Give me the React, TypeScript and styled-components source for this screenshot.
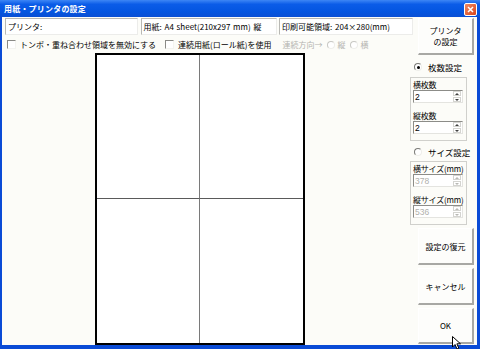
import styled, { createGlobalStyle } from 'styled-components';

const GlobalStyle = createGlobalStyle`
  html, body {
    margin: 0;
    padding: 0;
    background: #ffffff;
  }
  body {
    font-family: "Noto Sans CJK JP", "Liberation Sans", sans-serif;
    font-size: 8px;
    color: #000;
  }
`;

const Window = styled.div`
  position: relative;
  width: 480px;
  height: 349px;
  box-sizing: border-box;
  display: flex;
  flex-direction: column;
  background: #0a4bd6;
  overflow: hidden;
`;

const TitleBar = styled.div`
  height: 17px;
  flex-shrink: 0;
  display: flex;
  align-items: center;
  justify-content: space-between;
  padding: 0 3px 0 4px;
  background: linear-gradient(#3d86f5 0%, #0b5ce8 25%, #0455e0 70%, #0a4fd4 100%);
  color: #fff;
  font-weight: bold;
  font-size: 8px;
  letter-spacing: 0.2px;
`;

const CloseButton = styled.div`
  width: 13px;
  height: 13px;
  margin-top: 1px;
  box-sizing: border-box;
  border: 1px solid #fff;
  border-radius: 2px;
  background: linear-gradient(135deg, #ef8a62, #d9451c);
  display: flex;
  align-items: center;
  justify-content: center;
`;

const Client = styled.div`
  flex: 1;
  display: flex;
  margin: 0 3px 4px 2px;
  background: #fcfcf8;
`;

const Main = styled.div`
  width: 406px;
  flex-shrink: 0;
  display: flex;
  flex-direction: column;
  padding-left: 3px;
  box-sizing: border-box;
`;

const InfoRow = styled.div`
  width: 408px;
  margin-top: 1px;
  display: grid;
  grid-template-columns: 133px 136px 134px;
  column-gap: 2.5px;
  position: relative;
  z-index: 1;
`;

const InfoBox = styled.div`
  height: 17px;
  box-sizing: border-box;
  border-top: 1px solid #b8b8b4;
  border-left: 1px solid #b8b8b4;
  border-right: 1px solid #ececea;
  border-bottom: 1px solid #ececea;
  background: #fff;
  padding-left: 2px;
  display: flex;
  align-items: center;
  white-space: nowrap;
  overflow: hidden;
  word-spacing: 1px;
`;

const OptionRow = styled.div`
  height: 13px;
  margin-top: 3px;
  display: flex;
  align-items: center;
  white-space: nowrap;
`;

const Option = styled.label<{ $disabled?: boolean; $gap?: number; $left?: number }>`
  display: flex;
  align-items: center;
  gap: ${(p) => p.$gap ?? 4}px;
  margin-left: ${(p) => p.$left ?? 0}px;
  color: ${(p) => (p.$disabled ? '#b4b4b0' : '#000')};
`;

const CheckBox = styled.span`
  width: 9px;
  height: 9px;
  box-sizing: border-box;
  margin-left: 2px;
  border-top: 1px solid #8a8a86;
  border-left: 1px solid #8a8a86;
  border-right: 1px solid #f4f4f0;
  border-bottom: 1px solid #f4f4f0;
  background: #fff;
`;

const Radio = styled.span<{ $checked?: boolean; $disabled?: boolean }>`
  width: 8px;
  height: 8px;
  box-sizing: border-box;
  border-radius: 50%;
  border: 1px solid ${(p) => (p.$disabled ? '#c8c8c4' : '#7a7a76')};
  border-right-color: #eeeeea;
  border-bottom-color: #eeeeea;
  background: #fff;
  display: flex;
  align-items: center;
  justify-content: center;
  &::after {
    content: '';
    display: ${(p) => (p.$checked ? 'block' : 'none')};
    width: 3px;
    height: 3px;
    border-radius: 50%;
    background: #000;
  }
`;

const Preview = styled.div`
  flex: 1;
  display: flex;
  align-items: flex-start;
  padding-left: 90px;
  margin-top: 2px;
`;

const Paper = styled.div`
  width: 210px;
  height: 292px;
  box-sizing: border-box;
  border: 2px solid #000;
  background: #fff;
  display: grid;
  grid-template-columns: 1fr 1fr;
  grid-template-rows: 1fr 1fr;
`;

const Tile = styled.div<{ $right?: boolean; $bottom?: boolean }>`
  border-right: ${(p) => (p.$right ? 'none' : '1px solid #7a7a7a')};
  border-bottom: ${(p) => (p.$bottom ? 'none' : '1px solid #5a5a5a')};
`;

const Side = styled.div`
  flex: 1;
  display: flex;
  flex-direction: column;
  align-items: flex-start;
`;

const PushButton = styled.div<{ $height: number; $top: number }>`
  width: 56px;
  height: ${(p) => p.$height}px;
  margin-top: ${(p) => p.$top}px;
  margin-left: 10px;
  box-sizing: border-box;
  background: #fdfdfb;
  border-top: 1px solid #fff;
  border-left: 1px solid #fff;
  border-right: 2px solid #a8a8a4;
  border-bottom: 2px solid #a8a8a4;
  display: flex;
  align-items: center;
  justify-content: center;
  text-align: center;
  line-height: 11px;
  font-size: 8px;
  white-space: pre-line;
`;

const RadioRow = styled.div<{ $top: number }>`
  height: 12px;
  margin-top: ${(p) => p.$top}px;
  margin-left: 6px;
  display: flex;
  align-items: center;
  gap: 6px;
  font-size: 8.5px;
`;

const Group = styled.div<{ $top: number }>`
  width: 57px;
  height: 64px;
  margin-top: ${(p) => p.$top}px;
  margin-left: 2px;
  box-sizing: border-box;
  border: 1px solid #d0d0cc;
  padding: 1px 0 0 2px;
  display: flex;
  flex-direction: column;
`;

const FieldLabel = styled.div<{ $top?: number }>`
  height: 11px;
  line-height: 11px;
  margin-top: ${(p) => p.$top ?? 0}px;
  white-space: nowrap;
  letter-spacing: -0.2px;
`;

const SpinBox = styled.div<{ $disabled?: boolean }>`
  width: 50px;
  height: 13px;
  box-sizing: border-box;
  border-top: 1px solid #8c8c88;
  border-left: 1px solid #8c8c88;
  border-right: 1px solid #e4e4e0;
  border-bottom: 1px solid #e4e4e0;
  background: #fff;
  display: flex;
  align-items: center;
  justify-content: space-between;
  padding-left: 1px;
  color: ${(p) => (p.$disabled ? '#b0b0ac' : '#000')};
  font-family: "Liberation Sans", sans-serif;
  font-size: 8.5px;
`;

const Spinner = styled.div<{ $disabled?: boolean }>`
  width: 8px;
  height: 11px;
  margin-right: 1px;
  display: flex;
  flex-direction: column;
  gap: 1px;
  color: ${(p) => (p.$disabled ? '#b8b8b4' : '#404040')};
`;

const SpinHalf = styled.div`
  flex: 1;
  border: 1px solid #d4d4d0;
  box-sizing: border-box;
  display: flex;
  align-items: center;
  justify-content: center;
`;

const Cursor = styled.svg`
  position: absolute;
  left: 452px;
  top: 336px;
`;

const Arrow = ({ up }: { up?: boolean }) => (
  <svg width="4" height="2" viewBox="0 0 4 2">
    <path d={up ? 'M0 2 L2 0 L4 2 Z' : 'M0 0 L2 2 L4 0 Z'} fill="currentColor" />
  </svg>
);

const Spin = ({ value, disabled }: { value: string; disabled?: boolean }) => (
  <SpinBox $disabled={disabled}>
    <span>{value}</span>
    <Spinner $disabled={disabled}>
      <SpinHalf><Arrow up /></SpinHalf>
      <SpinHalf><Arrow /></SpinHalf>
    </Spinner>
  </SpinBox>
);

export default function App() {
  return (
    <>
      <GlobalStyle />
      <Window>
        <TitleBar>
          <span>用紙・プリンタの設定</span>
          <CloseButton>
            <svg width="7" height="7" viewBox="0 0 7 7">
              <path d="M1 1 L6 6 M6 1 L1 6" stroke="#fff" strokeWidth="1.5" />
            </svg>
          </CloseButton>
        </TitleBar>
        <Client>
          <Main>
            <InfoRow>
              <InfoBox>プリンタ:</InfoBox>
              <InfoBox>用紙: A4 sheet(210x297 mm) 縦</InfoBox>
              <InfoBox>印刷可能領域: 204×280(mm)</InfoBox>
            </InfoRow>
            <OptionRow>
              <Option>
                <CheckBox />
                トンボ・重ね合わせ領域を無効にする
              </Option>
              <Option $left={7}>
                <CheckBox />
                連続用紙(ロール紙)を使用
              </Option>
              <Option $disabled $left={11}>
                連続方向→
                <Option $disabled $gap={3}>
                  <Radio $disabled />縦
                </Option>
                <Option $disabled $gap={3}>
                  <Radio $disabled />横
                </Option>
              </Option>
            </OptionRow>
            <Preview>
              <Paper>
                <Tile />
                <Tile $right />
                <Tile $bottom />
                <Tile $right $bottom />
              </Paper>
            </Preview>
          </Main>
          <Side>
            <PushButton $height={37} $top={1}>{'プリンタ\nの設定'}</PushButton>
            <RadioRow $top={6}>
              <Radio $checked />
              枚数設定
            </RadioRow>
            <Group $top={4}>
              <FieldLabel>横枚数</FieldLabel>
              <Spin value="2" />
              <FieldLabel $top={7}>縦枚数</FieldLabel>
              <Spin value="2" />
            </Group>
            <RadioRow $top={5}>
              <Radio />
              サイズ設定
            </RadioRow>
            <Group $top={3}>
              <FieldLabel>横サイズ(mm)</FieldLabel>
              <Spin value="378" disabled />
              <FieldLabel $top={7}>縦サイズ(mm)</FieldLabel>
              <Spin value="536" disabled />
            </Group>
            <PushButton $height={37} $top={3}>設定の復元</PushButton>
            <PushButton $height={37} $top={3}>キャンセル</PushButton>
            <PushButton $height={36} $top={3}>OK</PushButton>
          </Side>
        </Client>
        <Cursor width="10" height="14" viewBox="0 0 10 14">
          <path d="M0.5 0.5 L0.5 11 L3 8.5 L5 13 L6.8 12.2 L4.9 7.8 L8.5 7.8 Z" fill="#fff" stroke="#000" strokeWidth="1" />
        </Cursor>
      </Window>
    </>
  );
}
